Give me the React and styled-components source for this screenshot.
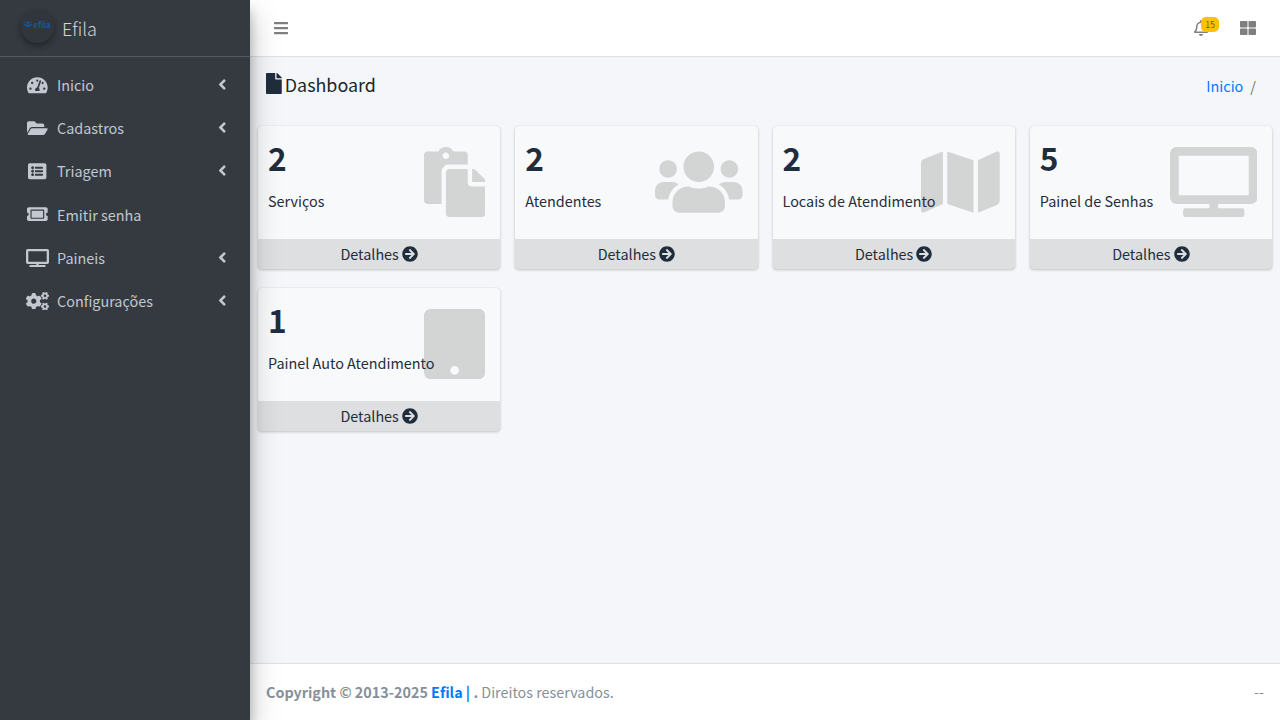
import React from 'react';
import styled, { createGlobalStyle } from 'styled-components';
import {
  FaAngleLeft,
  FaArrowCircleRight,
  FaBars,
  FaCogs,
  FaFile,
  FaFolderOpen,
  FaListAlt,
  FaMap,
  FaPaste,
  FaRegBell,
  FaTablet,
  FaTachometerAlt,
  FaThLarge,
  FaTicketAlt,
  FaTv,
  FaUsers,
} from 'react-icons/fa';

const GlobalStyle = createGlobalStyle`
  * {
    box-sizing: border-box;
  }

  html,
  body {
    margin: 0;
    padding: 0;
    height: 100%;
  }

  body {
    font-family: "Noto Sans CJK SC", "Open Sans", sans-serif;
    font-size: 14.4px;
    line-height: 22px;
    color: #212529;
    background: #f4f6f9;
  }

  a {
    text-decoration: none;
  }
`;

const Layout = styled.div`
  display: flex;
  height: 720px;
  overflow: hidden;
`;

const Sidebar = styled.aside`
  position: relative;
  z-index: 2;
  flex: 0 0 250px;
  background: #343a40;
  box-shadow: 0 14px 28px rgba(0, 0, 0, 0.25), 0 10px 10px rgba(0, 0, 0, 0.22);
`;

const Brand = styled.div`
  display: flex;
  align-items: center;
  height: 57px;
  padding: 0 0 1px 21px;
  border-bottom: 1px solid #4f5962;
`;

const BrandLogo = styled.span`
  display: flex;
  align-items: flex-start;
  justify-content: center;
  gap: 1px;
  width: 33px;
  height: 33px;
  margin: -2px 8px 0 0;
  padding-top: 10px;
  border-radius: 50%;
  background: #30363b;
  box-shadow: 0 3px 6px rgba(0, 0, 0, 0.16), 0 3px 6px rgba(0, 0, 0, 0.23);
  color: #14589c;
  font-size: 8px;
  font-weight: 700;
  line-height: 9px;

  svg {
    width: 8px;
    height: 8px;
  }
`;

const BrandName = styled.span`
  color: rgba(255, 255, 255, 0.8);
  font-size: 18px;
  font-weight: 300;
  line-height: 30px;
`;

const Nav = styled.nav`
  display: flex;
  flex-direction: column;
  padding-top: 6.4px;
`;

const NavLink = styled.a`
  display: flex;
  align-items: center;
  height: 43.2px;
  padding: 0 24px 0 24.5px;
  color: #c2c7d0;
`;

const NavIcon = styled.span`
  display: flex;
  align-items: center;
  justify-content: center;
  flex: 0 0 26px;
  margin-right: 6.5px;

  svg {
    width: ${props => props.$ratio * 18.4}px;
    height: 18.4px;
  }
`;

const NavLabel = styled.span`
  flex: 1;
`;

const Chevron = styled(FaAngleLeft)`
  width: 8.5px;
  height: 17px;
  margin-top: -1px;
`;

const Main = styled.div`
  flex: 1;
  display: flex;
  flex-direction: column;
  min-width: 0;
`;

const Header = styled.header`
  display: flex;
  align-items: center;
  justify-content: space-between;
  height: 57px;
  padding: 0 24px 1px 23px;
  background: #fff;
  border-bottom: 1px solid #dee2e6;
  color: rgba(0, 0, 0, 0.5);
`;

const HeaderRight = styled.div`
  display: flex;
  align-items: center;
  gap: 31px;
`;

const Bell = styled.span`
  position: relative;
  display: flex;
`;

const Badge = styled.span`
  position: absolute;
  top: -3px;
  left: 8px;
  padding: 0 4px;
  min-width: 18px;
  height: 15px;
  border-radius: 5px;
  background: #ffc107;
  color: #1f2d3d;
  font-size: 9px;
  font-weight: 300;
  line-height: 15px;
  text-align: center;
`;

const Content = styled.main`
  flex: 1;
`;

const ContentHeader = styled.div`
  display: flex;
  align-items: center;
  justify-content: space-between;
  height: 56px;
  margin-bottom: 13px;
  padding: 0 24px 0 16px;
`;

const PageTitle = styled.h1`
  display: flex;
  align-items: center;
  gap: 3px;
  margin: 0 0 2px;
  color: #212529;
  font-size: 17.9px;
  font-weight: 400;
  line-height: 28px;

  svg {
    width: 15.75px;
    height: 21px;
    margin-top: -2px;
    color: #1f2d3d;
  }
`;

const Breadcrumb = styled.div`
  display: flex;
  gap: 7px;
  margin-top: 2px;
  color: #6c757d;
`;

const BreadcrumbLink = styled.a`
  color: #007bff;
`;

const CardGrid = styled.div`
  display: grid;
  grid-template-columns: repeat(4, 1fr);
  gap: 19px 15px;
  padding: 0 8px;
`;

const Card = styled.div`
  position: relative;
  display: flex;
  flex-direction: column;
  height: 143px;
  border-radius: 4px;
  overflow: hidden;
  background: #f8f9fa;
  color: #1f2d3d;
  box-shadow: 0 0 1px rgba(0, 0, 0, 0.125), 0 1px 3px rgba(0, 0, 0, 0.2);
`;

const CardBody = styled.div`
  flex: 1;
  position: relative;
  z-index: 1;
  padding: 10px;
`;

const Count = styled.div`
  margin-bottom: 11px;
  font-size: 31.68px;
  font-weight: 700;
  line-height: 43px;
`;

const CardLabel = styled.div`
  line-height: 22px;
`;

const CardIcon = styled.span`
  position: absolute;
  top: 21px;
  right: 15px;
  display: flex;
  color: rgba(0, 0, 0, 0.15);

  svg {
    width: ${props => props.$ratio * 70}px;
    height: 70px;
  }
`;

const CardFooter = styled.a`
  position: relative;
  z-index: 1;
  display: flex;
  align-items: center;
  justify-content: center;
  gap: 3px;
  height: 30px;
  background: rgba(0, 0, 0, 0.1);
  color: #1f2d3d;

  svg {
    width: 16px;
    height: 16px;
  }
`;

const Footer = styled.footer`
  display: flex;
  align-items: center;
  justify-content: space-between;
  height: 57px;
  padding: 0 16px;
  background: #fff;
  border-top: 1px solid #dee2e6;
  color: #869099;
  font-size: 14.35px;
`;

const FooterLink = styled.a`
  color: #007bff;
`;

const navItems = [
  { label: 'Inicio', icon: FaTachometerAlt, ratio: 1.125, tree: true },
  { label: 'Cadastros', icon: FaFolderOpen, ratio: 1.125, tree: true },
  { label: 'Triagem', icon: FaListAlt, ratio: 1, tree: true },
  { label: 'Emitir senha', icon: FaTicketAlt, ratio: 1.125 },
  { label: 'Paineis', icon: FaTv, ratio: 1.25, tree: true },
  { label: 'Configurações', icon: FaCogs, ratio: 1.25, tree: true },
];

const cards = [
  { count: 2, label: 'Serviços', icon: FaPaste, ratio: 0.875 },
  { count: 2, label: 'Atendentes', icon: FaUsers, ratio: 1.25 },
  { count: 2, label: 'Locais de Atendimento', icon: FaMap, ratio: 1.125 },
  { count: 5, label: 'Painel de Senhas', icon: FaTv, ratio: 1.25 },
  { count: 1, label: 'Painel Auto Atendimento', icon: FaTablet, ratio: 0.875 },
];

export default function App() {
  return (
    <Layout>
      <GlobalStyle />
      <Sidebar>
        <Brand>
          <BrandLogo>
            <FaUsers />
            efila
          </BrandLogo>
          <BrandName>Efila</BrandName>
        </Brand>
        <Nav>
          {navItems.map(item => (
            <NavLink key={item.label}>
              <NavIcon $ratio={item.ratio}>
                <item.icon />
              </NavIcon>
              <NavLabel>{item.label}</NavLabel>
              {item.tree && <Chevron />}
            </NavLink>
          ))}
        </Nav>
      </Sidebar>
      <Main>
        <Header>
          <FaBars size={16} />
          <HeaderRight>
            <Bell>
              <FaRegBell size={16} />
              <Badge>15</Badge>
            </Bell>
            <FaThLarge size={16} />
          </HeaderRight>
        </Header>
        <Content>
          <ContentHeader>
            <PageTitle>
              <FaFile />
              Dashboard
            </PageTitle>
            <Breadcrumb>
              <BreadcrumbLink>Inicio</BreadcrumbLink>
              <span>/</span>
            </Breadcrumb>
          </ContentHeader>
          <CardGrid>
            {cards.map(card => (
              <Card key={card.label}>
                <CardIcon $ratio={card.ratio}>
                  <card.icon />
                </CardIcon>
                <CardBody>
                  <Count>{card.count}</Count>
                  <CardLabel>{card.label}</CardLabel>
                </CardBody>
                <CardFooter>
                  Detalhes
                  <FaArrowCircleRight />
                </CardFooter>
              </Card>
            ))}
          </CardGrid>
        </Content>
        <Footer>
          <span>
            <strong>
              Copyright © 2013-2025 <FooterLink>Efila | </FooterLink>.
            </strong>{' '}
            Direitos reservados.
          </span>
          <span>--</span>
        </Footer>
      </Main>
    </Layout>
  );
}
